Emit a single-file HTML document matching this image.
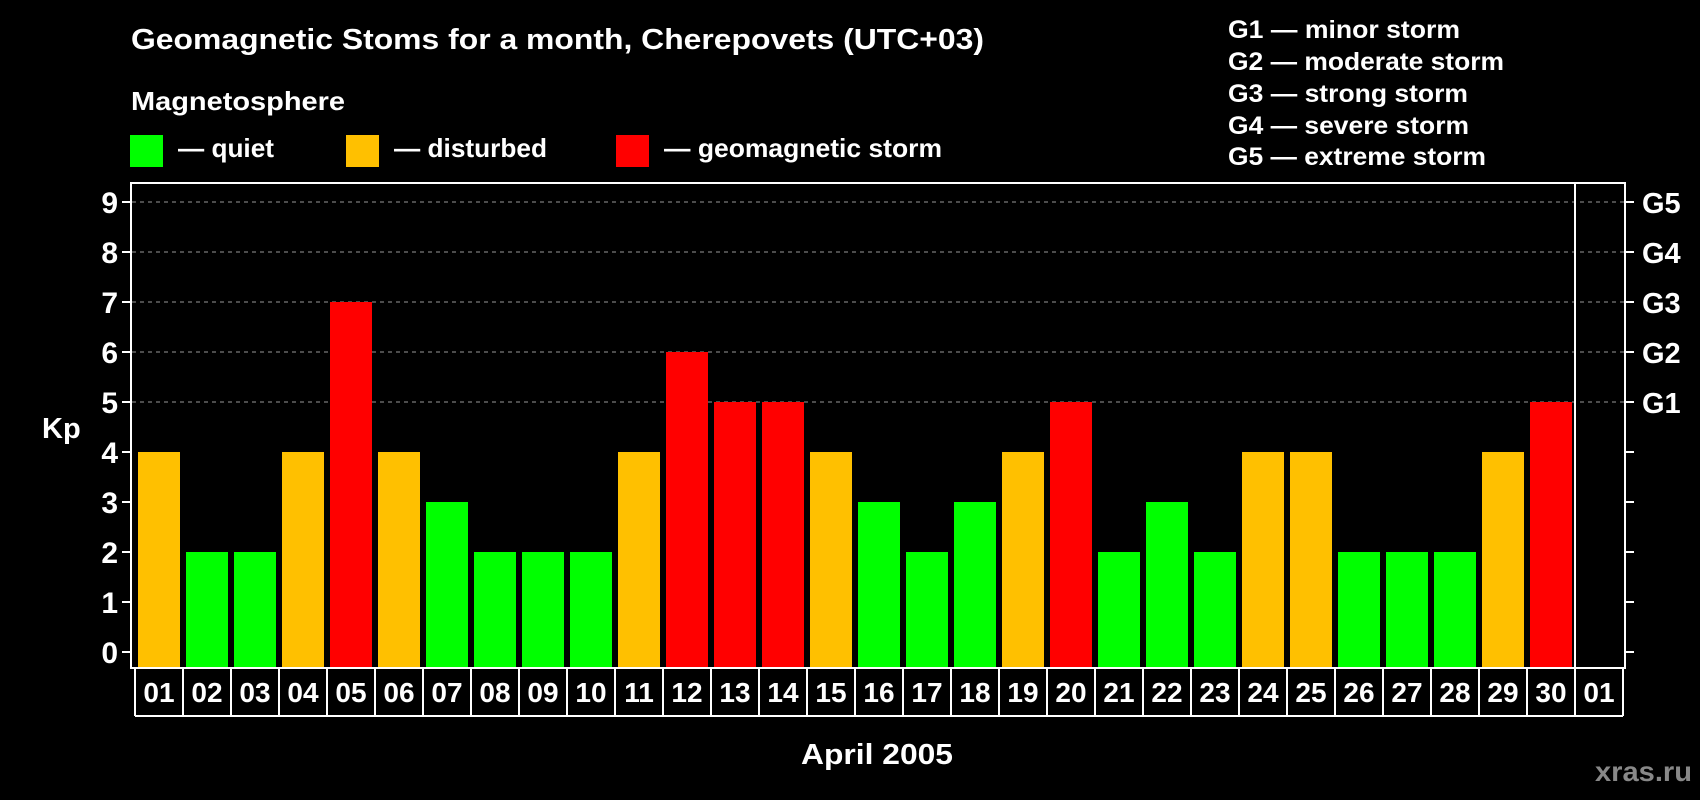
<!DOCTYPE html>
<html><head><meta charset="utf-8"><style>
html,body{margin:0;padding:0;background:#000;}
svg{display:block;}
text{font-family:"Liberation Sans",Arial,sans-serif;font-weight:bold;fill:#fff;}
</style></head><body>
<svg width="1700" height="800" viewBox="0 0 1700 800" xmlns="http://www.w3.org/2000/svg">
<rect width="1700" height="800" fill="#000"/>
<text x="131" y="49" font-size="29" textLength="853" lengthAdjust="spacingAndGlyphs">Geomagnetic Stoms for a month, Cherepovets (UTC+03)</text>
<text x="131" y="110" font-size="26" textLength="214" lengthAdjust="spacingAndGlyphs">Magnetosphere</text>
<rect x="130" y="135" width="33" height="32" fill="#00ff00"/>
<text x="178" y="157" font-size="26" textLength="96" lengthAdjust="spacingAndGlyphs">— quiet</text>
<rect x="346" y="135" width="33" height="32" fill="#ffc000"/>
<text x="394" y="157" font-size="26" textLength="153" lengthAdjust="spacingAndGlyphs">— disturbed</text>
<rect x="616" y="135" width="33" height="32" fill="#ff0000"/>
<text x="664" y="157" font-size="26" textLength="278" lengthAdjust="spacingAndGlyphs">— geomagnetic storm</text>
<g font-size="25">
<text x="1228" y="38" textLength="232" lengthAdjust="spacingAndGlyphs">G1 — minor storm</text>
<text x="1228" y="70" textLength="276" lengthAdjust="spacingAndGlyphs">G2 — moderate storm</text>
<text x="1228" y="102" textLength="240" lengthAdjust="spacingAndGlyphs">G3 — strong storm</text>
<text x="1228" y="134" textLength="241" lengthAdjust="spacingAndGlyphs">G4 — severe storm</text>
<text x="1228" y="165" textLength="258" lengthAdjust="spacingAndGlyphs">G5 — extreme storm</text>
</g>
<g stroke="#999" stroke-width="1" stroke-dasharray="4,4">
<line x1="132" x2="1624" y1="202" y2="202"/>
<line x1="132" x2="1624" y1="252" y2="252"/>
<line x1="132" x2="1624" y1="302" y2="302"/>
<line x1="132" x2="1624" y1="352" y2="352"/>
<line x1="132" x2="1624" y1="402" y2="402"/>
</g>
<g>
<rect x="138" y="452" width="42" height="215" fill="#ffc000"/>
<rect x="186" y="552" width="42" height="115" fill="#00ff00"/>
<rect x="234" y="552" width="42" height="115" fill="#00ff00"/>
<rect x="282" y="452" width="42" height="215" fill="#ffc000"/>
<rect x="330" y="302" width="42" height="365" fill="#ff0000"/>
<rect x="378" y="452" width="42" height="215" fill="#ffc000"/>
<rect x="426" y="502" width="42" height="165" fill="#00ff00"/>
<rect x="474" y="552" width="42" height="115" fill="#00ff00"/>
<rect x="522" y="552" width="42" height="115" fill="#00ff00"/>
<rect x="570" y="552" width="42" height="115" fill="#00ff00"/>
<rect x="618" y="452" width="42" height="215" fill="#ffc000"/>
<rect x="666" y="352" width="42" height="315" fill="#ff0000"/>
<rect x="714" y="402" width="42" height="265" fill="#ff0000"/>
<rect x="762" y="402" width="42" height="265" fill="#ff0000"/>
<rect x="810" y="452" width="42" height="215" fill="#ffc000"/>
<rect x="858" y="502" width="42" height="165" fill="#00ff00"/>
<rect x="906" y="552" width="42" height="115" fill="#00ff00"/>
<rect x="954" y="502" width="42" height="165" fill="#00ff00"/>
<rect x="1002" y="452" width="42" height="215" fill="#ffc000"/>
<rect x="1050" y="402" width="42" height="265" fill="#ff0000"/>
<rect x="1098" y="552" width="42" height="115" fill="#00ff00"/>
<rect x="1146" y="502" width="42" height="165" fill="#00ff00"/>
<rect x="1194" y="552" width="42" height="115" fill="#00ff00"/>
<rect x="1242" y="452" width="42" height="215" fill="#ffc000"/>
<rect x="1290" y="452" width="42" height="215" fill="#ffc000"/>
<rect x="1338" y="552" width="42" height="115" fill="#00ff00"/>
<rect x="1386" y="552" width="42" height="115" fill="#00ff00"/>
<rect x="1434" y="552" width="42" height="115" fill="#00ff00"/>
<rect x="1482" y="452" width="42" height="215" fill="#ffc000"/>
<rect x="1530" y="402" width="42" height="265" fill="#ff0000"/>
</g>
<g stroke="#fff" stroke-width="2" fill="none">
<rect x="131" y="183" width="1494" height="485"/>
<line x1="1575" x2="1575" y1="183" y2="668"/>
<path d="M122 202H131M122 252H131M122 302H131M122 352H131M122 402H131M122 452H131M122 502H131M122 552H131M122 602H131M122 652H131"/>
<path d="M1625 202H1634M1625 252H1634M1625 302H1634M1625 352H1634M1625 402H1634M1625 452H1634M1625 502H1634M1625 552H1634M1625 602H1634M1625 652H1634"/>
<path d="M135 716H1623M135 668V716M183 668V716M231 668V716M279 668V716M327 668V716M375 668V716M423 668V716M471 668V716M519 668V716M567 668V716M615 668V716M663 668V716M711 668V716M759 668V716M807 668V716M855 668V716M903 668V716M951 668V716M999 668V716M1047 668V716M1095 668V716M1143 668V716M1191 668V716M1239 668V716M1287 668V716M1335 668V716M1383 668V716M1431 668V716M1479 668V716M1527 668V716M1575 668V716M1623 668V716"/>
</g>
<g font-size="30" text-anchor="end">
<text x="118" y="213">9</text><text x="118" y="263">8</text><text x="118" y="313">7</text><text x="118" y="363">6</text><text x="118" y="413">5</text><text x="118" y="463">4</text><text x="118" y="513">3</text><text x="118" y="563">2</text><text x="118" y="613">1</text><text x="118" y="663">0</text>
</g>
<text x="42" y="438" font-size="29">Kp</text>
<g font-size="29">
<text x="1642" y="213">G5</text><text x="1642" y="263">G4</text><text x="1642" y="313">G3</text><text x="1642" y="363">G2</text><text x="1642" y="413">G1</text>
</g>
<g font-size="28" text-anchor="middle">
<text x="159" y="702">01</text><text x="207" y="702">02</text><text x="255" y="702">03</text><text x="303" y="702">04</text><text x="351" y="702">05</text><text x="399" y="702">06</text><text x="447" y="702">07</text><text x="495" y="702">08</text><text x="543" y="702">09</text><text x="591" y="702">10</text><text x="639" y="702">11</text><text x="687" y="702">12</text><text x="735" y="702">13</text><text x="783" y="702">14</text><text x="831" y="702">15</text><text x="879" y="702">16</text><text x="927" y="702">17</text><text x="975" y="702">18</text><text x="1023" y="702">19</text><text x="1071" y="702">20</text><text x="1119" y="702">21</text><text x="1167" y="702">22</text><text x="1215" y="702">23</text><text x="1263" y="702">24</text><text x="1311" y="702">25</text><text x="1359" y="702">26</text><text x="1407" y="702">27</text><text x="1455" y="702">28</text><text x="1503" y="702">29</text><text x="1551" y="702">30</text><text x="1599" y="702">01</text>
</g>
<text x="801" y="764" font-size="29" textLength="152" lengthAdjust="spacingAndGlyphs">April 2005</text>
<text x="1595" y="781" font-size="28" style="fill:#888" textLength="97" lengthAdjust="spacingAndGlyphs">xras.ru</text>
</svg>
</body></html>
